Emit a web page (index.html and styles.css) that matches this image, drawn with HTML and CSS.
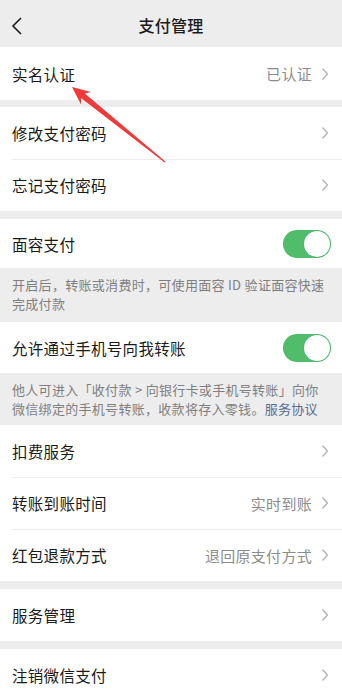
FILE: index.html
```html
<!DOCTYPE html>
<html lang="zh-CN">
<head>
    <meta charset="UTF-8">
    <meta name="viewport" content="width=device-width, initial-scale=1.0">
    <title>支付管理</title>
    <link rel="stylesheet" href="styles.css">
</head>
<body>
    <div class="page">
        <div class="nav-bar">
            <svg class="back" width="12" height="20" viewBox="0 0 12 20"><path d="M10 2L2 10l8 8" fill="none" stroke="#1a1a1a" stroke-width="1.6"/></svg>
            <span class="nav-title">支付管理</span>
        </div>

        <div class="group">
            <div class="cell cell-tall">
                <span class="cell-title">实名认证</span>
                <span class="cell-value">已认证</span>
                <svg class="chev" width="8" height="14" viewBox="0 0 8 14"><path d="M1.5 1.5L6.5 7l-5 5.5" fill="none" stroke="#b2b2b2" stroke-width="1.3"/></svg>
            </div>
        </div>

        <div class="gap gap-7"></div>

        <div class="group">
            <div class="cell">
                <span class="cell-title">修改支付密码</span>
                <svg class="chev" width="8" height="14" viewBox="0 0 8 14"><path d="M1.5 1.5L6.5 7l-5 5.5" fill="none" stroke="#b2b2b2" stroke-width="1.3"/></svg>
            </div>
            <div class="cell">
                <span class="cell-title">忘记支付密码</span>
                <svg class="chev" width="8" height="14" viewBox="0 0 8 14"><path d="M1.5 1.5L6.5 7l-5 5.5" fill="none" stroke="#b2b2b2" stroke-width="1.3"/></svg>
            </div>
        </div>

        <div class="gap gap-8"></div>

        <div class="group">
            <div class="cell cell-switch">
                <span class="cell-title">面容支付</span>
                <span class="switch"></span>
            </div>
        </div>
        <div class="tips">开启后，转账或消费时，可使用面容 ID 验证面容快速完成付款</div>

        <div class="group">
            <div class="cell cell-switch2">
                <span class="cell-title">允许通过手机号向我转账</span>
                <span class="switch"></span>
            </div>
        </div>
        <div class="tips tips-short">他人可进入「收付款 &gt; 向银行卡或手机号转账」向你微信绑定的手机号转账，收款将存入零钱。<a class="link">服务协议</a></div>

        <div class="group">
            <div class="cell">
                <span class="cell-title">扣费服务</span>
                <svg class="chev" width="8" height="14" viewBox="0 0 8 14"><path d="M1.5 1.5L6.5 7l-5 5.5" fill="none" stroke="#b2b2b2" stroke-width="1.3"/></svg>
            </div>
            <div class="cell">
                <span class="cell-title">转账到账时间</span>
                <span class="cell-value">实时到账</span>
                <svg class="chev" width="8" height="14" viewBox="0 0 8 14"><path d="M1.5 1.5L6.5 7l-5 5.5" fill="none" stroke="#b2b2b2" stroke-width="1.3"/></svg>
            </div>
            <div class="cell">
                <span class="cell-title">红包退款方式</span>
                <span class="cell-value">退回原支付方式</span>
                <svg class="chev" width="8" height="14" viewBox="0 0 8 14"><path d="M1.5 1.5L6.5 7l-5 5.5" fill="none" stroke="#b2b2b2" stroke-width="1.3"/></svg>
            </div>
        </div>

        <div class="gap gap-8"></div>

        <div class="group">
            <div class="cell">
                <span class="cell-title">服务管理</span>
                <svg class="chev" width="8" height="14" viewBox="0 0 8 14"><path d="M1.5 1.5L6.5 7l-5 5.5" fill="none" stroke="#b2b2b2" stroke-width="1.3"/></svg>
            </div>
        </div>

        <div class="gap gap-8"></div>

        <div class="group">
            <div class="cell">
                <span class="cell-title">注销微信支付</span>
                <svg class="chev" width="8" height="14" viewBox="0 0 8 14"><path d="M1.5 1.5L6.5 7l-5 5.5" fill="none" stroke="#b2b2b2" stroke-width="1.3"/></svg>
            </div>
        </div>

        <!-- red annotation arrow drawn over the list -->
        <svg class="arrow" width="342" height="200" viewBox="0 0 342 200">
            <polygon points="72,87 91,92.1 84.8,93.5 165.4,161.5 164.6,162.5 81,98.1 81,104.5" fill="#ef3a39"/>
        </svg>
    </div>
</body>
</html>
```

FILE: styles.css
```css
* {
    margin: 0;
    padding: 0;
    box-sizing: border-box;
}

body {
    font-family: 'Noto Sans CJK SC', 'Noto Sans', sans-serif;
    background: #ededed;
    color: #1a1a1a;
}

.page {
    position: relative;
    width: 342px;
    overflow: hidden;
}

.nav-bar {
    height: 47px;
    display: flex;
    align-items: center;
    justify-content: center;
    position: relative;
}

.back {
    position: absolute;
    left: 11px;
    top: 16px;
}

.nav-title {
    font-size: 16px;
    font-weight: 500;
    letter-spacing: 0.3px;
    margin-top: 2px;
}

.group {
    background: #fff;
}

.cell {
    height: 52px;
    display: flex;
    align-items: center;
    padding: 0 13px 0 12px;
    position: relative;
}

.cell + .cell::before {
    content: '';
    position: absolute;
    top: 0;
    left: 12px;
    right: 0;
    border-top: 1px solid #ececec;
}

.cell-tall {
    height: 53px;
}

.cell-switch {
    height: 49px;
    padding-right: 11px;
}

.cell-switch2 {
    height: 51px;
    padding-right: 11px;
}

.cell-title {
    flex: 1;
    font-size: 15.5px;
    letter-spacing: 0.3px;
}

.cell-value {
    font-size: 15px;
    color: #8c8c8c;
    margin-right: 9px;
    letter-spacing: 0.3px;
}

.chev {
    display: block;
}

.switch {
    width: 48px;
    height: 28px;
    border-radius: 14px;
    background: #4fbd6a;
    position: relative;
}

.switch::after {
    content: '';
    position: absolute;
    right: 1px;
    top: 1px;
    width: 26px;
    height: 26px;
    border-radius: 50%;
    background: #fff;
    box-shadow: 0 0 0 0.5px rgba(0, 0, 0, 0.08);
}

.tips {
    padding: 7px 16px 8px 12px;
    font-size: 13px;
    line-height: 19px;
    letter-spacing: 0.3px;
    color: #7f7f7f;
    height: 54px;
}

.tips-short {
    height: 52px;
}

.link {
    color: #576b95;
}

.gap-7 { height: 7px; }
.gap-8 { height: 8px; }

.arrow {
    position: absolute;
    left: 0;
    top: 0;
    pointer-events: none;
}
```
